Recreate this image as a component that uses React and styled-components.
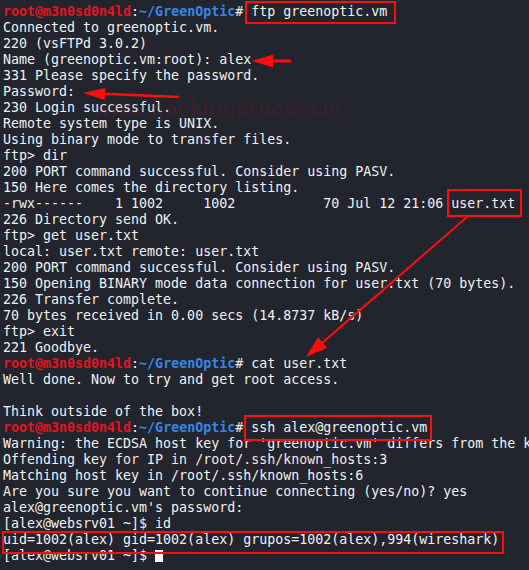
import React from "react";
import styled, { createGlobalStyle } from "styled-components";

const Global = createGlobalStyle`
  html, body { margin: 0; padding: 0; background: #22252d; }
  body { overflow: hidden; }
`;

const Screen = styled.div`
  position: relative;
  width: 529px;
  height: 570px;
  overflow: hidden;
  background: #22252d;
  box-sizing: border-box;
  padding: 4px 0 0 3px;
`;

const Output = styled.div`
  display: flex;
  flex-direction: column;
  font-family: "DejaVu Sans Mono", "Liberation Mono", monospace;
  font-size: 13.3px;
  color: #f1f1f1;
`;

const Line = styled.div`
  height: 16px;
  line-height: 16px;
  white-space: pre;
`;

const User = styled.span`
  color: #e5141d;
  font-weight: bold;
`;

const Path = styled.span`
  color: #3686e8;
  font-weight: bold;
`;

const Highlight = styled.span`
  position: relative;
  display: inline-block;
  height: 16px;
  vertical-align: top;
  &::after {
    content: "";
    position: absolute;
    top: ${(p) => -p.$t}px;
    right: ${(p) => -p.$r}px;
    bottom: ${(p) => -p.$b}px;
    left: ${(p) => -p.$l}px;
    border: 2px solid #ff0d0d;
    pointer-events: none;
  }
`;

const Cursor = styled.span`
  display: inline-block;
  width: 8px;
  height: 12px;
  margin-top: 2px;
  vertical-align: top;
  background: #ffffff;
`;

const Watermark = styled.div`
  position: absolute;
  left: ${(p) => p.$x}px;
  top: ${(p) => p.$y}px;
  font-family: "Liberation Sans", Arial, sans-serif;
  font-weight: bold;
  font-size: 22px;
  letter-spacing: 0.3px;
  color: rgba(170, 20, 35, ${(p) => p.$a});
  pointer-events: none;
  white-space: nowrap;
`;

const Annotations = styled.svg`
  position: absolute;
  left: 0;
  top: 0;
  pointer-events: none;
`;

const Prompt = () => (
  <>
    <User>root@m3n0sd0n4ld</User>:<Path>~/GreenOptic</Path>#{" "}
  </>
);

function Arrow({ x1, y1, x2, y2, w = 2.5, head = 21, half = 6.5 }) {
  const dx = x2 - x1;
  const dy = y2 - y1;
  const len = Math.hypot(dx, dy);
  const ux = dx / len;
  const uy = dy / len;
  const bx = x2 - ux * head;
  const by = y2 - uy * head;
  const px = -uy;
  const py = ux;
  return (
    <g>
      <line x1={x1} y1={y1} x2={bx + ux * 2} y2={by + uy * 2} stroke="#ff0d0d" strokeWidth={w} />
      <polygon
        points={`${x2},${y2} ${bx + px * half},${by + py * half} ${bx - px * half},${by - py * half}`}
        fill="#ff0d0d"
      />
    </g>
  );
}

export default function App() {
  return (
    <>
      <Global />
      <Screen>
        <Output>
          <Line>
            <Prompt />
            <Highlight $l={6} $r={9} $t={3} $b={4}>ftp greenoptic.vm</Highlight>
          </Line>
          <Line>Connected to greenoptic.vm.</Line>
          <Line>220 (vsFTPd 3.0.2)</Line>
          <Line>Name (greenoptic.vm:root): alex</Line>
          <Line>331 Please specify the password.</Line>
          <Line>Password:</Line>
          <Line>230 Login successful.</Line>
          <Line>Remote system type is UNIX.</Line>
          <Line>Using binary mode to transfer files.</Line>
          <Line>ftp&gt; dir</Line>
          <Line>200 PORT command successful. Consider using PASV.</Line>
          <Line>150 Here comes the directory listing.</Line>
          <Line>
            {"-rwx------    1 1002     1002           70 Jul 12 21:06 "}
            <Highlight $l={4} $r={7} $t={7} $b={5}>user.txt</Highlight>
          </Line>
          <Line>226 Directory send OK.</Line>
          <Line>ftp&gt; get user.txt</Line>
          <Line>local: user.txt remote: user.txt</Line>
          <Line>200 PORT command successful. Consider using PASV.</Line>
          <Line>150 Opening BINARY mode data connection for user.txt (70 bytes).</Line>
          <Line>226 Transfer complete.</Line>
          <Line>70 bytes received in 0.00 secs (14.8737 kB/s)</Line>
          <Line>ftp&gt; exit</Line>
          <Line>221 Goodbye.</Line>
          <Line>
            <Prompt />
            cat user.txt
          </Line>
          <Line>Well done. Now to try and get root access.</Line>
          <Line> </Line>
          <Line>Think outside of the box!</Line>
          <Line>
            <Prompt />
            <Highlight $l={7} $r={5} $t={5} $b={5}>ssh alex@greenoptic.vm</Highlight>
          </Line>
          <Line>Warning: the ECDSA host key for 'greenoptic.vm' differs from the key for the IP address</Line>
          <Line>Offending key for IP in /root/.ssh/known_hosts:3</Line>
          <Line>Matching host key in /root/.ssh/known_hosts:6</Line>
          <Line>Are you sure you want to continue connecting (yes/no)? yes</Line>
          <Line>alex@greenoptic.vm's password:</Line>
          <Line>[alex@websrv01 ~]$ id</Line>
          <Line>
            <Highlight $l={1} $r={5} $t={1} $b={6}>
              uid=1002(alex) gid=1002(alex) grupos=1002(alex),994(wireshark)
            </Highlight>
          </Line>
          <Line>
            {"[alex@websrv01 ~]$ "}
            <Cursor />
          </Line>
        </Output>

        <Watermark $x={93} $y={96} $a={0.16}>www.hackingarticles.in</Watermark>
        <Watermark $x={98} $y={448} $a={0.09}>www.hackingarticles.in</Watermark>

        <Annotations width="529" height="570" viewBox="0 0 529 570">
          <Arrow x1={291} y1={61} x2={252} y2={61} w={3} head={21} half={6.5} />
          <Arrow x1={179} y1={97} x2={83} y2={93} w={2.5} head={22} half={6} />
          <Arrow x1={467} y1={217} x2={306} y2={357} w={2} head={22} half={7} />
        </Annotations>
      </Screen>
    </>
  );
}
